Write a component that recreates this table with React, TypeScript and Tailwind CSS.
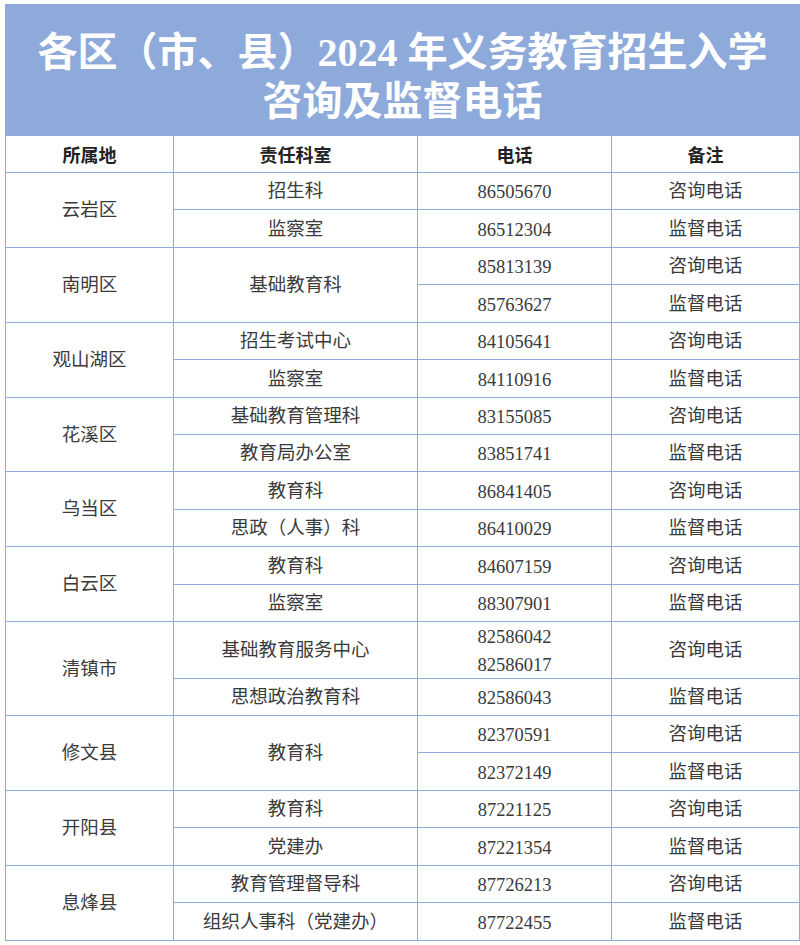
import React from "react";

type Row = { dept?: string; deptSpan?: number; phones: string[]; note: string };
type Group = { area: string; rows: Row[] };

const groups: Group[] = [
  { area: "云岩区", rows: [
    { dept: "招生科", phones: ["86505670"], note: "咨询电话" },
    { dept: "监察室", phones: ["86512304"], note: "监督电话" },
  ]},
  { area: "南明区", rows: [
    { dept: "基础教育科", deptSpan: 2, phones: ["85813139"], note: "咨询电话" },
    { phones: ["85763627"], note: "监督电话" },
  ]},
  { area: "观山湖区", rows: [
    { dept: "招生考试中心", phones: ["84105641"], note: "咨询电话" },
    { dept: "监察室", phones: ["84110916"], note: "监督电话" },
  ]},
  { area: "花溪区", rows: [
    { dept: "基础教育管理科", phones: ["83155085"], note: "咨询电话" },
    { dept: "教育局办公室", phones: ["83851741"], note: "监督电话" },
  ]},
  { area: "乌当区", rows: [
    { dept: "教育科", phones: ["86841405"], note: "咨询电话" },
    { dept: "思政（人事）科", phones: ["86410029"], note: "监督电话" },
  ]},
  { area: "白云区", rows: [
    { dept: "教育科", phones: ["84607159"], note: "咨询电话" },
    { dept: "监察室", phones: ["88307901"], note: "监督电话" },
  ]},
  { area: "清镇市", rows: [
    { dept: "基础教育服务中心", phones: ["82586042", "82586017"], note: "咨询电话" },
    { dept: "思想政治教育科", phones: ["82586043"], note: "监督电话" },
  ]},
  { area: "修文县", rows: [
    { dept: "教育科", deptSpan: 2, phones: ["82370591"], note: "咨询电话" },
    { phones: ["82372149"], note: "监督电话" },
  ]},
  { area: "开阳县", rows: [
    { dept: "教育科", phones: ["87221125"], note: "咨询电话" },
    { dept: "党建办", phones: ["87221354"], note: "监督电话" },
  ]},
  { area: "息烽县", rows: [
    { dept: "教育管理督导科", phones: ["87726213"], note: "咨询电话" },
    { dept: "组织人事科（党建办）", phones: ["87722455"], note: "监督电话" },
  ]},
];

const bodyFont = "[font-family:'Liberation_Serif','Noto_Sans_CJK_SC',serif]";
const cell =
  "bg-white flex items-center justify-center pt-[2px] text-[18.5px] text-[#3a3a3a] font-[family-name:'Liberation_Serif','Noto_Sans_CJK_SC',serif]";
const headCell =
  "bg-white flex items-center justify-center text-[18px] font-bold text-[#222] font-[family-name:'Noto_Sans_CJK_SC',sans-serif]";

export default function App() {
  const cells: React.ReactNode[] = [];
  groups.forEach((g, gi) => {
    g.rows.forEach((r, ri) => {
      if (ri === 0) {
        cells.push(
          <div key={`a${gi}`} className={`${cell} row-span-2`}>
            {g.area}
          </div>
        );
      }
      if (r.dept) {
        cells.push(
          <div key={`d${gi}-${ri}`} className={`${cell} ${r.deptSpan === 2 ? "row-span-2" : ""}`}>
            {r.dept}
          </div>
        );
      }
      cells.push(
        <div key={`p${gi}-${ri}`} className={`${cell} flex-col leading-[28px]`}>
          {r.phones.map((p) => (
            <span key={p}>{p}</span>
          ))}
        </div>
      );
      cells.push(
        <div key={`n${gi}-${ri}`} className={cell}>
          {r.note}
        </div>
      );
    });
  });

  return (
    <div className={`w-[800px] h-[945px] bg-white pt-[4px] pl-[5px] ${bodyFont}`}>
      <div className="w-[795px] grid grid-cols-[167px_243px_193px_187px] grid-rows-[130px_36px_36px_37px_36px_37px_36px_37px_36px_36px_37px_36px_37px_36px_56px_36px_36px_37px_36px_37px_36px_37px] gap-px p-px bg-[#8eaadf]">
        <div className="col-span-4 bg-[#8eaadb] flex flex-col items-center pt-[23px] text-white font-bold text-[40px] leading-[49px] font-[family-name:'Liberation_Serif','Noto_Sans_CJK_SC',serif]">
          <div>各区（市、县）2024 年义务教育招生入学</div>
          <div>咨询及监督电话</div>
        </div>
        <div className={headCell}>所属地</div>
        <div className={headCell}>责任科室</div>
        <div className={headCell}>电话</div>
        <div className={headCell}>备注</div>
        {cells}
      </div>
    </div>
  );
}
